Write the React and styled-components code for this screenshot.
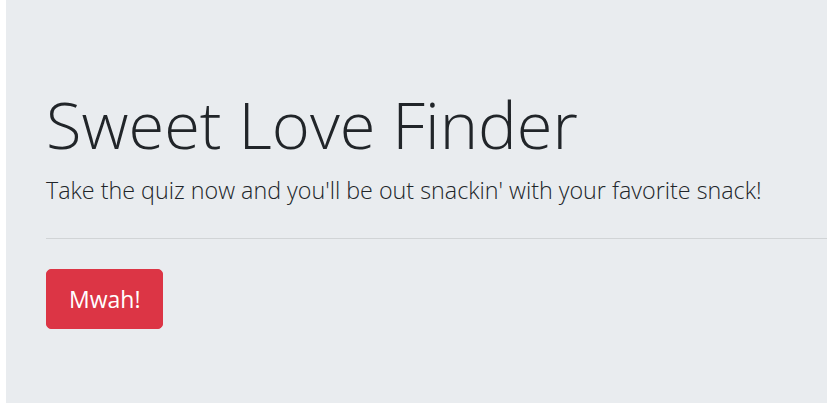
import styled, { createGlobalStyle } from "styled-components"

const GlobalStyle = createGlobalStyle`
    html, body {
        margin: 0;
        padding: 0;
        background: #ffffff;
        overflow: hidden;
    }
    body {
        font-family: "Open Sans", "Liberation Sans", sans-serif;
        color: #212529;
    }
`

export default function App() {
    return (
        <>
            <GlobalStyle />
            <Jumbotron>
                <Title>Sweet Love Finder</Title>
                <Lead>Take the quiz now and you'll be out snackin' with your favorite snack!</Lead>
                <Divider />
                <Button>Mwah!</Button>
            </Jumbotron>
        </>
    );
}

const Jumbotron = styled.section`
    margin-left: 6px;
    height: 403px;
    box-sizing: border-box;
    padding: 85px 0 0 40px;
    background: #e9ecef;
    display: flex;
    flex-direction: column;
    align-items: flex-start;
`

const Title = styled.h1`
    margin: 0 0 10px;
    font-size: 65px;
    font-weight: 300;
    line-height: 1.2;
    color: #212529;
`

const Lead = styled.p`
    margin: 0;
    font-size: 23.3px;
    font-weight: 300;
    line-height: 1.5;
`

const Divider = styled.hr`
    align-self: stretch;
    margin: 30px 0 30px;
    border: 0;
    border-top: 1px solid rgba(0, 0, 0, 0.1);
`

const Button = styled.button`
    height: 60px;
    padding: 0 22px;
    font-family: inherit;
    font-size: 23px;
    line-height: 1.5;
    color: #ffffff;
    background: #dc3545;
    border: 1px solid #dc3545;
    border-radius: 5px;
`
